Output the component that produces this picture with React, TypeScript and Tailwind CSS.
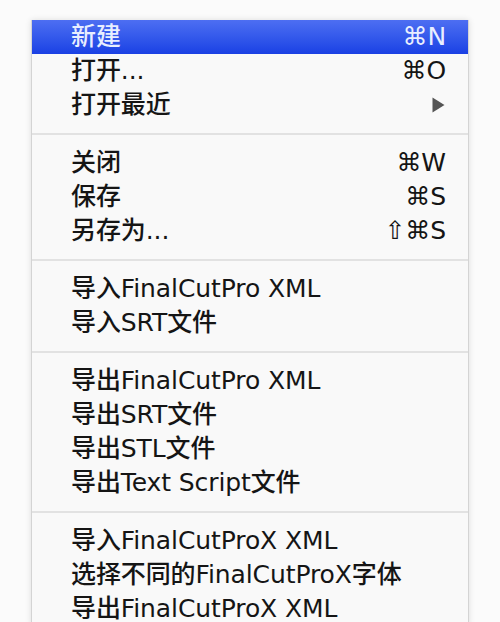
import React from "react";

type Item = { label: string; shortcut?: string; arrow?: boolean; active?: boolean };

const groups: Item[][] = [
  [
    { label: "新建", shortcut: "⌘N", active: true },
    { label: "打开...", shortcut: "⌘O" },
    { label: "打开最近", arrow: true },
  ],
  [
    { label: "关闭", shortcut: "⌘W" },
    { label: "保存", shortcut: "⌘S" },
    { label: "另存为...", shortcut: "⇧⌘S" },
  ],
  [{ label: "导入FinalCutPro XML" }, { label: "导入SRT文件" }],
  [
    { label: "导出FinalCutPro XML" },
    { label: "导出SRT文件" },
    { label: "导出STL文件" },
    { label: "导出Text Script文件" },
  ],
  [
    { label: "导入FinalCutProX XML" },
    { label: "选择不同的FinalCutProX字体" },
    { label: "导出FinalCutProX XML" },
  ],
];

function Row({ item }: { item: Item }) {
  return (
    <div
      className={
        "flex h-[34px] items-center justify-between pl-[39px] pr-[22px] " +
        (item.active
          ? "bg-gradient-to-b from-[#4d6ef2] to-[#1a40e4] text-[#e8eeff]"
          : "text-[#151515]")
      }
    >
      <span className="whitespace-nowrap">{item.label}</span>
      {item.shortcut && <span className="whitespace-nowrap">{item.shortcut}</span>}
      {item.arrow && (
        <svg width="13" height="16" viewBox="0 0 13 16" className="mr-[1px]">
          <path d="M0.5 0.5 L12.5 8 L0.5 15.5 Z" fill="#555555" />
        </svg>
      )}
    </div>
  );
}

export default function App() {
  return (
    <div
      className="h-[622px] w-[500px] overflow-hidden bg-[#fbfbfb] pt-[20px] pl-[31px]"
      style={{ fontFamily: '"DejaVu Sans", "Noto Sans CJK SC", sans-serif' }}
    >
      <div className="w-[438px] border-x border-[#d4d4d4] bg-[#f9f9f9] text-[25px] font-medium tracking-[-0.1px] shadow-[0_0_6px_rgba(0,0,0,0.12)]">
        {groups.map((g, gi) => (
          <div key={gi}>
            {gi > 0 && (
              <div className="flex h-[24px] items-center">
                <div className="h-[2px] w-full bg-[#e2e2e2]" />
              </div>
            )}
            {g.map((it, i) => (
              <Row key={i} item={it} />
            ))}
          </div>
        ))}
      </div>
    </div>
  );
}
